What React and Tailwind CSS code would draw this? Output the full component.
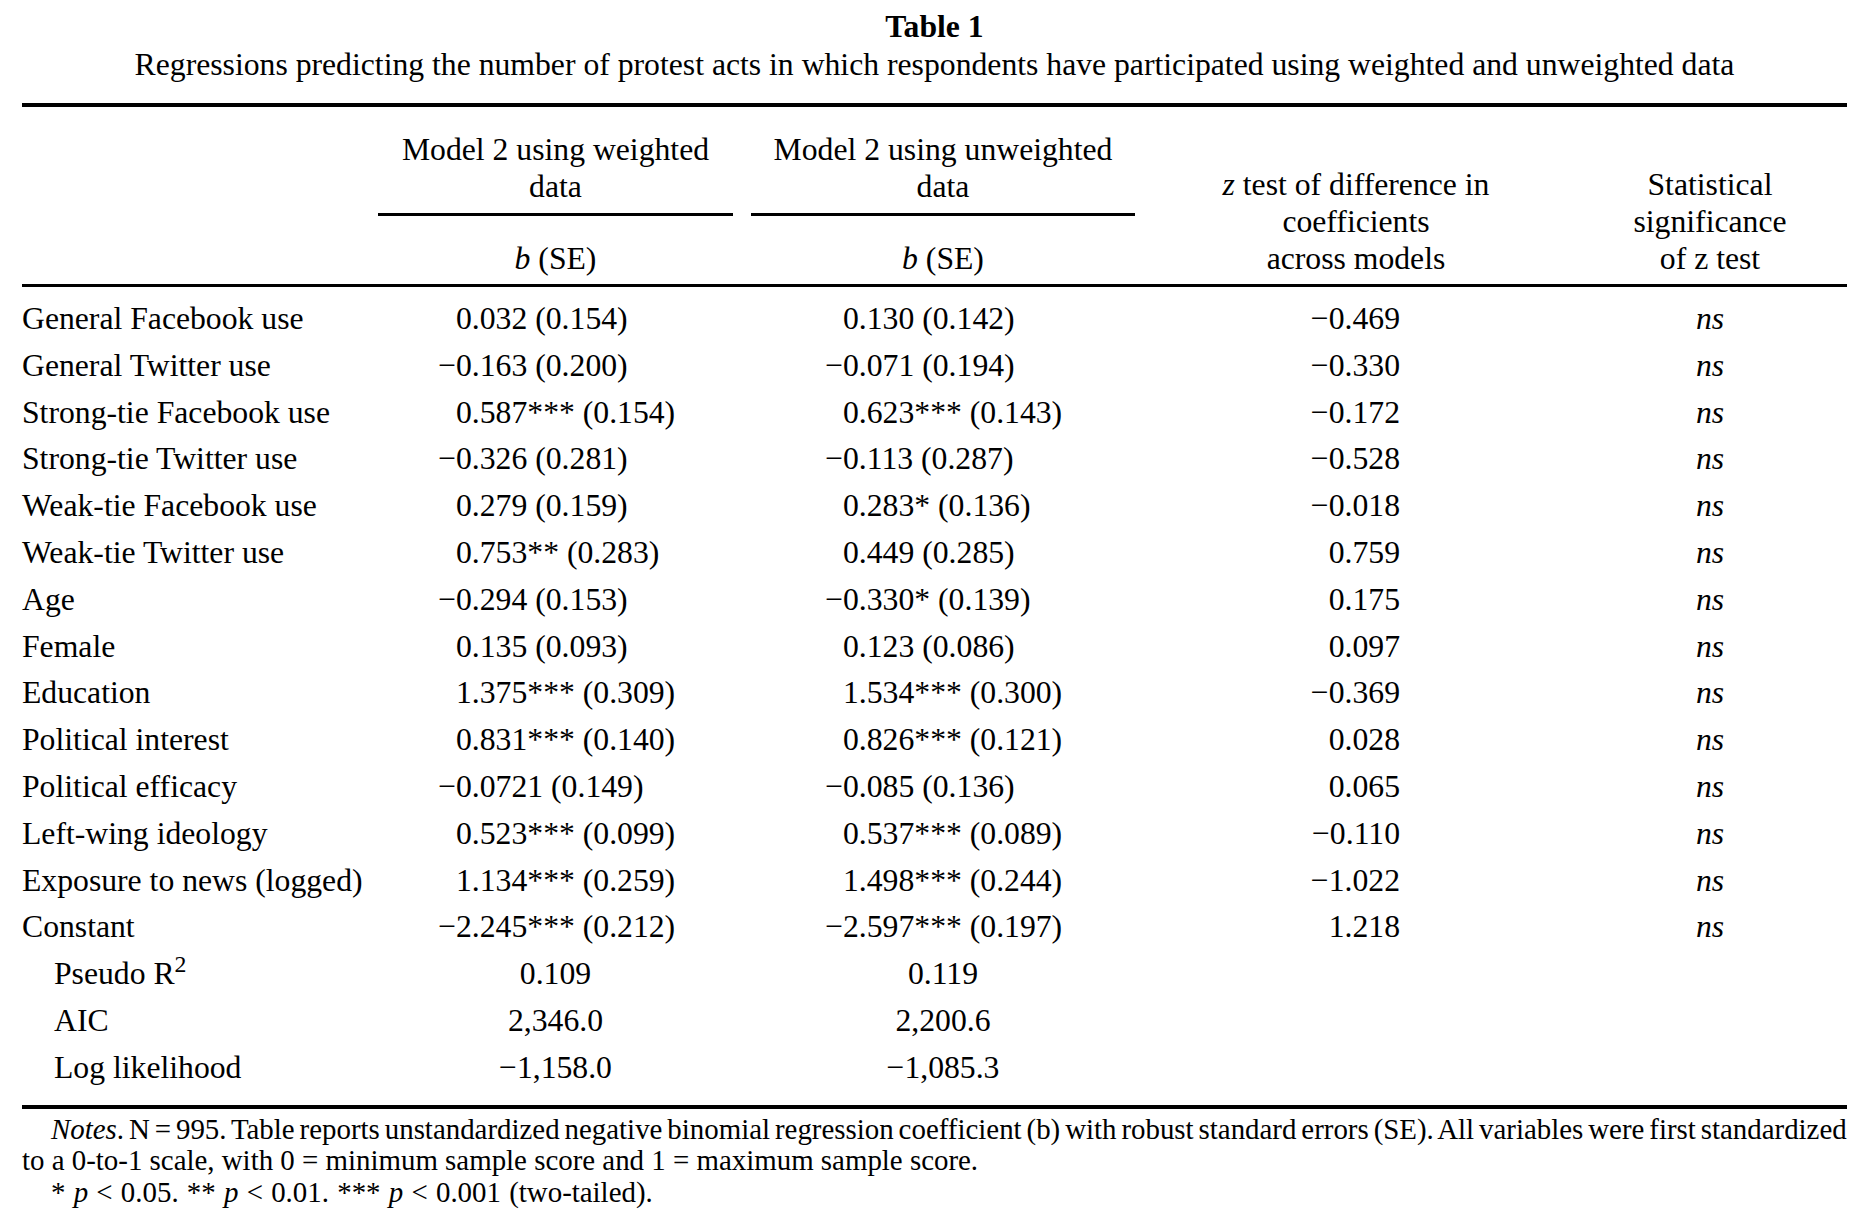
const rows = [
  ["General Facebook use", "0.032 (0.154)", "0.130 (0.142)", "−0.469"],
  ["General Twitter use", "−0.163 (0.200)", "−0.071 (0.194)", "−0.330"],
  ["Strong-tie Facebook use", "0.587*** (0.154)", "0.623*** (0.143)", "−0.172"],
  ["Strong-tie Twitter use", "−0.326 (0.281)", "−0.113 (0.287)", "−0.528"],
  ["Weak-tie Facebook use", "0.279 (0.159)", "0.283* (0.136)", "−0.018"],
  ["Weak-tie Twitter use", "0.753** (0.283)", "0.449 (0.285)", "0.759"],
  ["Age", "−0.294 (0.153)", "−0.330* (0.139)", "0.175"],
  ["Female", "0.135 (0.093)", "0.123 (0.086)", "0.097"],
  ["Education", "1.375*** (0.309)", "1.534*** (0.300)", "−0.369"],
  ["Political interest", "0.831*** (0.140)", "0.826*** (0.121)", "0.028"],
  ["Political efficacy", "−0.0721 (0.149)", "−0.085 (0.136)", "0.065"],
  ["Left-wing ideology", "0.523*** (0.099)", "0.537*** (0.089)", "−0.110"],
  ["Exposure to news (logged)", "1.134*** (0.259)", "1.498*** (0.244)", "−1.022"],
  ["Constant", "−2.245*** (0.212)", "−2.597*** (0.197)", "1.218"],
];

const stats = [
  [<>Pseudo R<sup>2</sup></>, "0.109", "0.119"],
  ["AIC", "2,346.0", "2,200.6"],
  ["Log likelihood", "−1,158.0", "−1,085.3"],
];

// minus sign hangs to the left so the digits line up
function Coef({ value }) {
  const neg = value.startsWith("−");
  return (
    <div className="flex">
      <span className="w-[18px] text-right">{neg ? "−" : ""}</span>
      <span>{neg ? value.slice(1) : value}</span>
    </div>
  );
}

const grid = "grid grid-cols-[347px_373px_402px_424px_279px]";

export default function App() {
  return (
    <div className="min-h-screen bg-white text-black font-['Liberation_Serif','Times_New_Roman',serif]">
      <div className="ml-[22px] w-[1825px] pt-[8px] text-[31.7px]">
        <div className="text-center font-bold leading-[38px]">Table 1</div>
        <div className="text-center leading-[38px]">
          Regressions predicting the number of protest acts in which respondents have participated using weighted and unweighted data
        </div>

        <div className="mt-[19px] h-[4px] bg-black" />

        <div className={`${grid} items-end pt-[23.5px] pb-[7.5px] text-center leading-[37px]`}>
          <div />
          <div className="flex flex-col">
            <div>Model 2 using weighted<br />data</div>
            <div className="mx-[9px] mt-[8px] h-[3px] bg-black" />
            <div className="mt-[24px]"><i>b</i> (SE)</div>
          </div>
          <div className="flex flex-col">
            <div>Model 2 using unweighted<br />data</div>
            <div className="mx-[9px] mt-[8px] h-[3px] bg-black" />
            <div className="mt-[24px]"><i>b</i> (SE)</div>
          </div>
          <div><i>z</i> test of difference in<br />coefficients<br />across models</div>
          <div className="pl-[5px]">Statistical<br />significance<br />of z test</div>
        </div>

        <div className="h-[3px] bg-black" />

        <div className="pt-[8px] pb-[14px]">
          {rows.map(([label, a, b, z]) => (
            <div key={label} className={`${grid} h-[46.8px] items-center`}>
              <div className="whitespace-nowrap">{label}</div>
              <div className="pl-[69px]"><Coef value={a} /></div>
              <div className="pl-[83px]"><Coef value={b} /></div>
              <div className="pr-[168px] text-right">{z}</div>
              <div className="pl-[5px] text-center italic">ns</div>
            </div>
          ))}
          {stats.map(([label, a, b], i) => (
            <div key={i} className={`${grid} h-[46.8px] items-center`}>
              <div className="pl-[32px] whitespace-nowrap">{label}</div>
              <div className="text-center">{a}</div>
              <div className="text-center">{b}</div>
              <div />
              <div />
            </div>
          ))}
        </div>

        <div className="h-[4px] bg-black" />

        <div className="mt-[5px] text-[28.9px] leading-[31.5px]">
          <div className="pl-[29px] whitespace-nowrap [word-spacing:-2.3px]">
            <i>Notes</i>. N = 995. Table reports unstandardized negative binomial regression coefficient (b) with robust standard errors (SE). All variables were first standardized
          </div>
          <div className="whitespace-nowrap">to a 0-to-1 scale, with 0 = minimum sample score and 1 = maximum sample score.</div>
          <div className="pl-[29px] whitespace-nowrap [word-spacing:1px]">
            * <i>p</i> &lt; 0.05. ** <i>p</i> &lt; 0.01. *** <i>p</i> &lt; 0.001 (two-tailed).
          </div>
        </div>
      </div>
    </div>
  );
}
